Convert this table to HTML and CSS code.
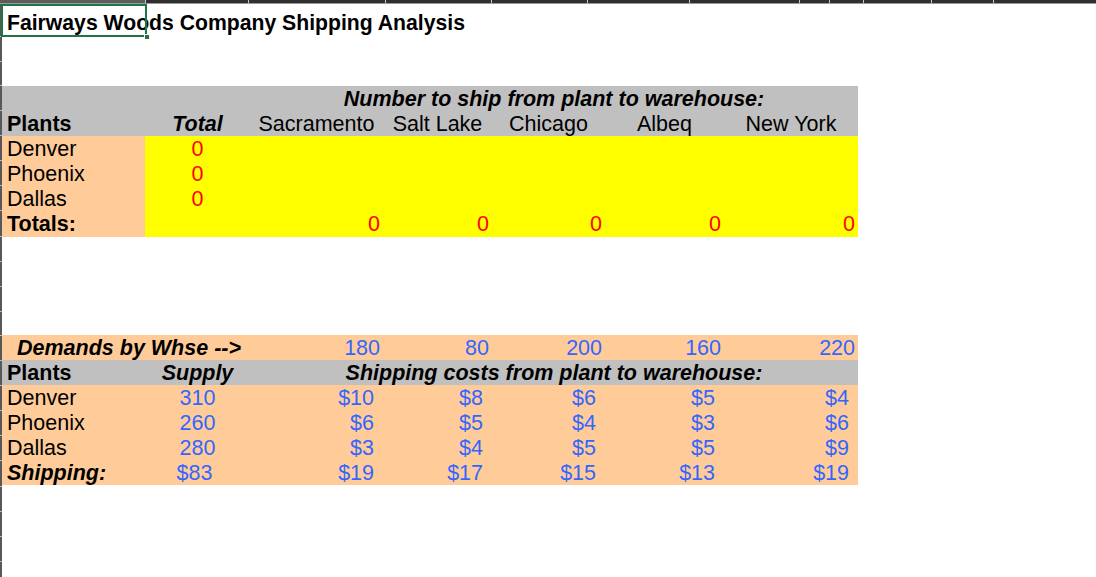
FILE: index.html
```html
<!DOCTYPE html>
<html>
<head>
<meta charset="utf-8">
<link rel="stylesheet" href="styles.css">
</head>
<body>
<div class="colheads">
  <span class="ch sel" style="width:146px"></span>
  <span class="ch" style="width:103px"></span>
  <span class="ch" style="width:137px"></span>
  <span class="ch" style="width:106px"></span>
  <span class="ch" style="width:96px"></span>
  <span class="ch" style="width:102px"></span>
  <span class="ch" style="width:110px"></span>
  <span class="ch" style="width:30px"></span>
  <span class="ch" style="width:34px"></span>
  <span class="ch" style="width:68px"></span>
  <span class="ch" style="width:62px"></span>
  <span class="ch last"></span>
</div>
<div class="frame">
  <div class="rowheads">
    <div class="rh" style="height:33px"></div>
    <div class="rh" style="height:25px"></div>
    <div class="rh" style="height:24px"></div>
    <div class="rh" style="height:25px"></div>
    <div class="rh" style="height:25px"></div>
    <div class="rh" style="height:25px"></div>
    <div class="rh" style="height:25px"></div>
    <div class="rh" style="height:25px"></div>
    <div class="rh" style="height:26px"></div>
    <div class="rh" style="height:25px"></div>
    <div class="rh" style="height:25px"></div>
    <div class="rh" style="height:25px"></div>
    <div class="rh" style="height:24px"></div>
    <div class="rh" style="height:25px"></div>
    <div class="rh" style="height:25px"></div>
    <div class="rh" style="height:25px"></div>
    <div class="rh" style="height:25px"></div>
    <div class="rh" style="height:25px"></div>
    <div class="rh" style="height:26px"></div>
    <div class="rh" style="height:25px"></div>
    <div class="rh" style="height:25px"></div>
    <div class="rh" style="height:25px"></div>
  </div>
  <div class="sheet">
    <div class="title-row">
      <div class="selection"><span class="handle"></span></div>
      <div class="title">Fairways Woods Company Shipping Analysis</div>
    </div>
    <div class="gap1"></div>

    <div class="grid t1">
      <div class="c grey"></div>
      <div class="c grey"></div>
      <div class="c grey span5 bi center">Number to ship from plant to warehouse:</div>

      <div class="c grey b">Plants</div>
      <div class="c grey bi center">Total</div>
      <div class="c grey center">Sacramento</div>
      <div class="c grey center">Salt Lake</div>
      <div class="c grey center">Chicago</div>
      <div class="c grey center">Albeq</div>
      <div class="c grey center">New York</div>

      <div class="c peach">Denver</div>
      <div class="c yellow red center">0</div>
      <div class="c yellow span5"></div>

      <div class="c peach">Phoenix</div>
      <div class="c yellow red center">0</div>
      <div class="c yellow span5"></div>

      <div class="c peach">Dallas</div>
      <div class="c yellow red center">0</div>
      <div class="c yellow span5"></div>

      <div class="c peach b last">Totals:</div>
      <div class="c yellow last"></div>
      <div class="c yellow red right last">0</div>
      <div class="c yellow red right last">0</div>
      <div class="c yellow red right last">0</div>
      <div class="c yellow red right last">0</div>
      <div class="c yellow red right last">0</div>
    </div>

    <div class="gap2"></div>

    <div class="grid t2">
      <div class="c span2 bi demand">Demands by Whse --&gt;</div>
      <div class="c blue right">180</div>
      <div class="c blue right">80</div>
      <div class="c blue right">200</div>
      <div class="c blue right">160</div>
      <div class="c blue right">220</div>

      <div class="c grey b">Plants</div>
      <div class="c grey bi center">Supply</div>
      <div class="c grey span5 bi center">Shipping costs from plant to warehouse:</div>

      <div class="c">Denver</div>
      <div class="c blue center">310</div>
      <div class="c blue cost">$10</div>
      <div class="c blue cost">$8</div>
      <div class="c blue cost">$6</div>
      <div class="c blue cost">$5</div>
      <div class="c blue cost">$4</div>

      <div class="c">Phoenix</div>
      <div class="c blue center">260</div>
      <div class="c blue cost">$6</div>
      <div class="c blue cost">$5</div>
      <div class="c blue cost">$4</div>
      <div class="c blue cost">$3</div>
      <div class="c blue cost">$6</div>

      <div class="c">Dallas</div>
      <div class="c blue center">280</div>
      <div class="c blue cost">$3</div>
      <div class="c blue cost">$4</div>
      <div class="c blue cost">$5</div>
      <div class="c blue cost">$5</div>
      <div class="c blue cost">$9</div>

      <div class="c bi last">Shipping:</div>
      <div class="c blue center last ship-total">$83</div>
      <div class="c blue cost last">$19</div>
      <div class="c blue cost last">$17</div>
      <div class="c blue cost last">$15</div>
      <div class="c blue cost last">$13</div>
      <div class="c blue cost last">$19</div>
    </div>
  </div>
</div>
</body>
</html>
```

FILE: styles.css
```css
* { box-sizing: border-box; }

html, body {
  margin: 0;
  padding: 0;
  background: #ffffff;
}

body {
  width: 1096px;
  height: 577px;
  overflow: hidden;
  font-family: "Liberation Sans", Arial, sans-serif;
  font-size: 21.5px;
  color: #000;
}

/* column header strip */
.colheads {
  display: flex;
  height: 4px;
  background: #2f2f2f;
  border-bottom: 1px solid #9a9a9a;
}
.ch {
  display: block;
  height: 3px;
  border-right: 1px solid #c8c8c8;
  background: #2f2f2f;
}
.ch.sel { background: #5c5c5c; }
.ch.last { flex: 1; border-right: none; }

.frame {
  display: flex;
}

/* row header strip */
.rowheads {
  width: 2px;
  display: flex;
  flex-direction: column;
  background: #585858;
  height: 573px;
}
.rh {
  flex: none;
  border-bottom: 1px solid #bdbdbd;
}

.sheet {
  flex: 1;
  display: flex;
  flex-direction: column;
}

.title-row {
  position: relative;
  height: 33px;
}
.title {
  font-size: 21.2px;
  font-weight: bold;
  line-height: 25px;
  padding: 6px 0 0 5px;
  white-space: nowrap;
}
.selection {
  position: absolute;
  left: -1px;
  top: 0;
  width: 146px;
  height: 33px;
  border: 2px solid #217346;
}
.handle {
  position: absolute;
  right: -5px;
  bottom: -5px;
  width: 6px;
  height: 6px;
  background: #217346;
  border: 1px solid #fff;
}

.gap1 { height: 49px; }
.gap2 { height: 99px; }

.grid {
  display: grid;
  grid-template-columns: 143px 105px 133px 109px 113px 119px 134px;
  grid-auto-rows: 25px;
  width: 856px;
}
.t2 { background: #ffcc99; }

.c {
  line-height: 24px;
  height: 25px;
  padding: 1px 5px 0 5px;
  white-space: nowrap;
  overflow: visible;
}
.c.last { height: 26px; }

.span5 { grid-column: span 5; }
.span2 { grid-column: span 2; }

.grey { background: #c0c0c0; }
.peach { background: #ffcc99; }
.yellow { background: #ffff00; }

.b { font-weight: bold; }
.bi { font-weight: bold; font-style: italic; }

.center { text-align: center; }
.right { text-align: right; padding-right: 3px; }
.cost { text-align: right; padding-right: 9px; }

.red { color: #ff0000; }
.blue { color: #3366ff; }

.demand { padding-left: 15px; }
.ship-total { padding-right: 11px; }
```
